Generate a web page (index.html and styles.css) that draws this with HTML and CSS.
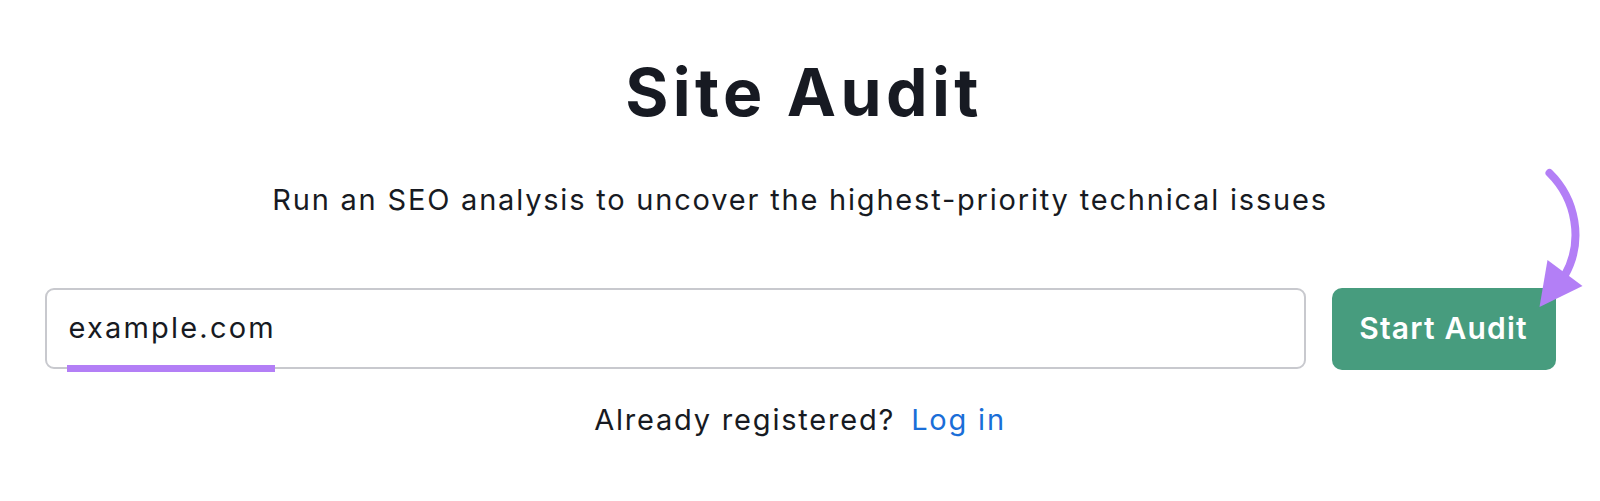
FILE: index.html
```html
<!DOCTYPE html>
<html lang="en">
<head>
    <meta charset="UTF-8">
    <meta name="viewport" content="width=device-width, initial-scale=1.0">
    <title>Site Audit</title>
    <link rel="stylesheet" href="styles.css">
</head>
<body>
    <div class="container">
        <h1 class="title">Site Audit</h1>
        <p class="subtitle">Run an SEO analysis to uncover the highest-priority technical issues</p>

        <div class="audit-form">
            <div class="field">
                <span class="field-text">example.com</span>
                <span class="field-mark"></span>
            </div>
            <button class="start-btn">Start Audit</button>
            <!-- purple hint arrow pointing at the button -->
            <svg class="hint-arrow" width="64" height="150" viewBox="0 0 64 150">
                <path d="M13.5 10 C 40 36, 48 78, 29 112" fill="none" stroke="#b37ff6" stroke-width="8" stroke-linecap="round"/>
                <polygon points="11.5,97 46.5,123 3.5,144" fill="#b37ff6"/>
            </svg>
        </div>

        <p class="login">Already registered? <a href="#">Log in</a></p>
    </div>
</body>
</html>
```

FILE: styles.css
```css
body {
    margin: 0;
    padding: 0;
    background-color: #fff;
    font-family: Inter, "Noto Sans", sans-serif;
    color: #171a22;
    overflow: hidden;
}
.container {
    width: 1511px;
    margin: 0 auto;
    text-align: center;
}
.title {
    margin: 0;
    padding: 56px 0 0 8px;
    font-size: 66px;
    line-height: 72px;
    font-weight: 700;
    letter-spacing: 4.4px;
}
.subtitle {
    margin: 54px 0 0;
    font-size: 29px;
    line-height: 36px;
    letter-spacing: 1.8px;
}
.audit-form {
    position: relative;
    display: flex;
    gap: 26px;
    margin-top: 70px;
}
.field {
    position: relative;
    flex: 1;
    box-sizing: border-box;
    height: 81px;
    border: 2px solid #c8c9ce;
    border-radius: 9px;
    text-align: left;
    display: flex;
    align-items: center;
    padding: 0 0 3px 22px;
}
.field-text {
    font-size: 29px;
    letter-spacing: 2.2px;
    color: #171a22;
}
.field-mark {
    position: absolute;
    left: 20px;
    bottom: -5px;
    width: 208px;
    height: 7px;
    background-color: #b37ff6;
}
.start-btn {
    width: 224px;
    height: 82px;
    border: none;
    border-radius: 10px;
    background-color: #479c7e;
    color: #fff;
    font-family: Inter, "Noto Sans", sans-serif;
    font-size: 30px;
    font-weight: 600;
    letter-spacing: 1.2px;
    padding: 0 0 3px;
    cursor: pointer;
}
.hint-arrow {
    position: absolute;
    right: -44px;
    top: -125px;
}
.login {
    margin: 32px 0 0;
    font-size: 29px;
    line-height: 36px;
    letter-spacing: 1.8px;
}
.login a {
    color: #1a6ed8;
    text-decoration: none;
    margin-left: 6px;
}
```
